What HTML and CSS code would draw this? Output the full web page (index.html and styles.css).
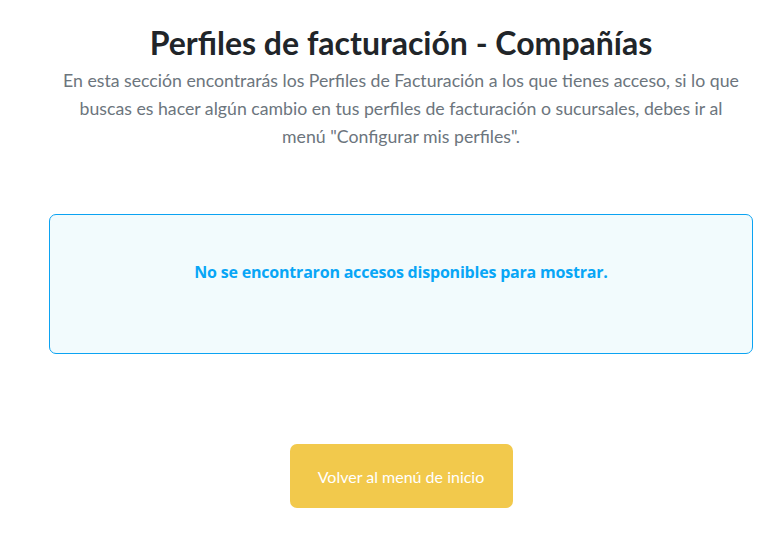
FILE: index.html
```html
<!DOCTYPE html>
<html lang="es">
<head>
<meta charset="utf-8">
<title>Perfiles de facturación - Compañías</title>
<link rel="stylesheet" href="styles.css">
</head>
<body>
<main class="page">
  <header class="intro">
    <h1 class="title">Perfiles de facturación - Compañías</h1>
    <p class="lead">En esta sección encontrarás los Perfiles de Facturación a los que tienes acceso, si lo que buscas es hacer algún cambio en tus perfiles de facturación o sucursales, debes ir al menú "Configurar mis perfiles".</p>
  </header>
  <section class="empty">
    <p class="empty-text">No se encontraron accesos disponibles para mostrar.</p>
  </section>
  <div class="actions">
    <button class="btn" type="button">Volver al menú de inicio</button>
  </div>
</main>
</body>
</html>
```

FILE: styles.css
```css
html, body {
  margin: 0;
  padding: 0;
  background: #ffffff;
}
body {
  font-family: Lato, "Open Sans", sans-serif;
}
.page {
  padding: 0 4px 0 49px;
  display: flex;
  flex-direction: column;
}
.intro {
  display: flex;
  flex-direction: column;
  align-items: center;
  text-align: center;
  padding-top: 24px;
}
.title {
  margin: 0;
  font-size: 32px;
  font-weight: 700;
  line-height: 38px;
  color: #212529;
}
.lead {
  margin: 5px 0 0;
  max-width: 686px;
  font-size: 17.7px;
  line-height: 28px;
  color: #6c757d;
}
.empty {
  margin-top: 63px;
  border: 1px solid #0ba3f2;
  border-radius: 7px;
  background: #f2fbfd;
  display: flex;
  justify-content: center;
  padding-top: 46px;
  box-sizing: border-box;
  height: 140px;
}
.empty-text {
  margin: 0;
  font-family: "Open Sans", Lato, sans-serif;
  font-size: 16px;
  font-weight: 700;
  line-height: 22px;
  letter-spacing: -0.2px;
  color: #08a6f6;
}
.actions {
  display: flex;
  justify-content: center;
  margin-top: 90px;
}
.btn {
  width: 223px;
  height: 64px;
  border: 0;
  border-radius: 7px;
  background: #f2c94c;
  color: #ffffff;
  font-family: Lato, sans-serif;
  font-size: 16px;
  cursor: pointer;
}
```
